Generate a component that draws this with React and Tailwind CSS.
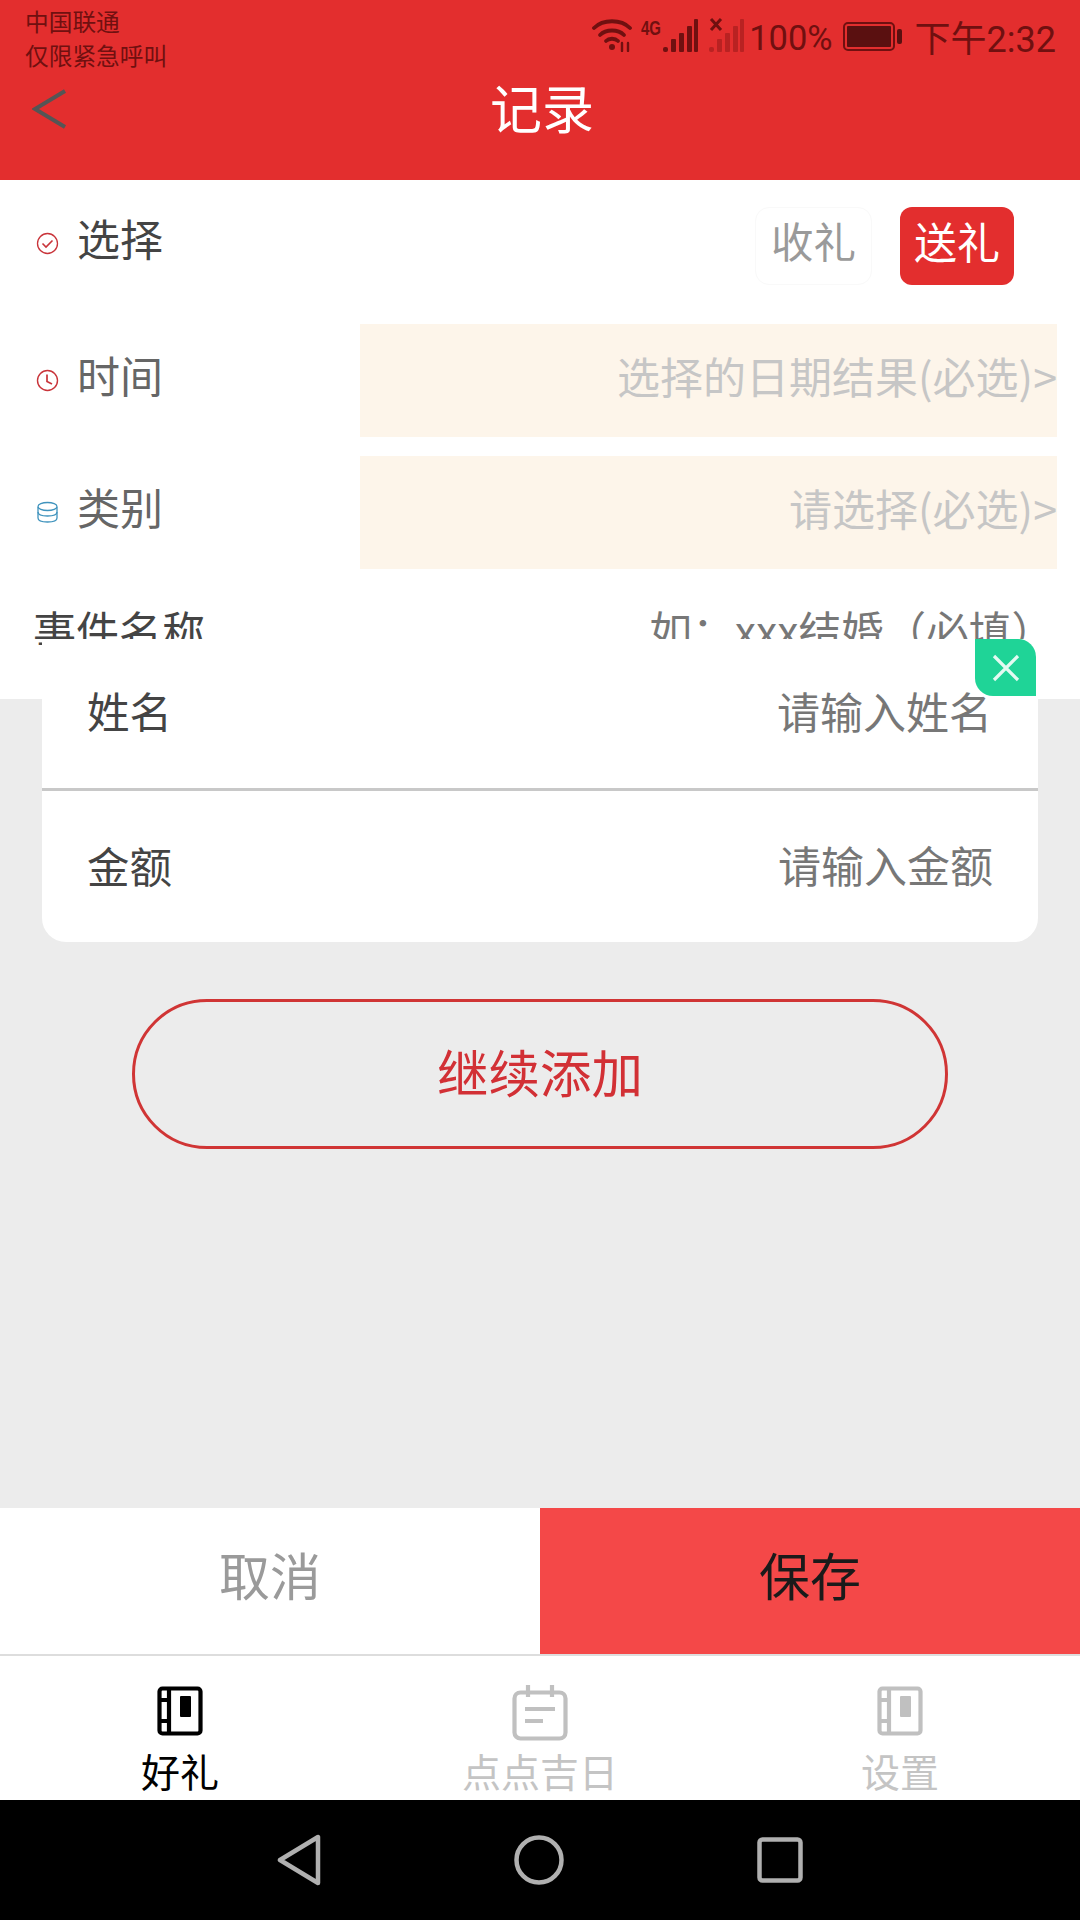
const cjk = "font-['Noto_Sans_CJK_SC','Noto_Sans',sans-serif]"

function Bars({ className }) {
  return (
    <svg width="36" height="34" viewBox="0 0 36 34" className={className}>
      <rect x="1" y="28" width="5" height="5" rx="2" fill="currentColor" />
      <rect x="9" y="20" width="5" height="13" rx="1" fill="currentColor" />
      <rect x="17" y="14" width="5" height="19" rx="1" fill="currentColor" />
      <rect x="25" y="7" width="5" height="26" rx="1" fill="currentColor" />
      <rect x="32" y="0" width="4" height="33" rx="1" fill="currentColor" />
    </svg>
  )
}

function StatusBar() {
  return (
    <div className="flex justify-between h-[68px] pl-[25px] pr-[24px] text-[#701010]">
      <div className="pt-[4px] text-[23.7px] leading-[34px]">
        <div>中国联通</div>
        <div>仅限紧急呼叫</div>
      </div>
      <div className="flex items-start pt-[18px]">
        <svg width="42" height="34" viewBox="0 0 42 34" fill="none" stroke="currentColor" strokeWidth="3.8" strokeLinecap="round">
          <path d="M2 10 C11 1 29 1 38 10" />
          <path d="M8 17 C14 11 26 11 32 17" />
          <path d="M14 23 C17 20 23 20 26 23" />
          <circle cx="20" cy="29" r="3" fill="currentColor" stroke="none" />
          <path d="M30 25 L30 33 M36 25 L36 33" strokeWidth="2.4" />
        </svg>
        <svg width="20" height="18" viewBox="0 0 20 18" className="ml-[7px] mt-[1px]">
          <text x="0" y="16" fontSize="20" fontWeight="700" fontFamily="Liberation Sans" fill="currentColor" textLength="20" lengthAdjust="spacingAndGlyphs">4G</text>
        </svg>
        <Bars className="ml-[1px] mt-[1px]" />
        <div className="relative ml-[10px] w-[36px] h-[34px]">
          <Bars className="text-[#b92222] mt-[1px]" />
          <svg width="16" height="14" viewBox="0 0 16 14" className="absolute left-0 top-0" stroke="#701010" strokeWidth="3">
            <path d="M3 1 L13 12 M13 1 L3 12" />
          </svg>
        </div>
        <span className="ml-[5px] mt-[2px] font-['Roboto',sans-serif] text-[34.5px] leading-[36px]">100%</span>
        <svg width="60" height="30" viewBox="0 0 60 30" className="ml-[10px] mt-[4px]">
          <rect x="1" y="1" width="50" height="27" rx="4" fill="none" stroke="#701010" strokeWidth="2" />
          <rect x="4" y="4" width="44" height="21" rx="1" fill="#5a1010" />
          <rect x="54" y="7" width="5" height="15" rx="2" fill="#5a1010" />
        </svg>
        <span className="ml-[12px] text-[36px] leading-[36px] whitespace-nowrap">下午<span className="font-['Roboto',sans-serif]">2:32</span></span>
      </div>
    </div>
  )
}

function Header() {
  return (
    <div className="h-[180px] bg-[#e32e2e] shrink-0">
      <StatusBar />
      <div className="relative flex items-center justify-center h-[86px]">
        <svg width="36" height="40" viewBox="0 0 36 40" fill="none" stroke="#555555" strokeWidth="4" className="absolute left-[32px] top-[21px]">
          <path d="M33 2 L3 20 L33 38" />
        </svg>
        <span className="text-[52px] leading-[60px] text-white pb-[8px] pl-[4px]">记录</span>
      </div>
    </div>
  )
}

function CheckIcon() {
  return (
    <svg width="23" height="23" viewBox="0 0 23 23" fill="none" stroke="#c9343a" strokeWidth="1.3">
      <circle cx="11.5" cy="11.5" r="10" />
      <path d="M6.5 11.5 L10 15 L16.5 8.5" strokeWidth="1.6" />
    </svg>
  )
}

function ClockIcon() {
  return (
    <svg width="23" height="23" viewBox="0 0 23 23" fill="none" stroke="#c9343a" strokeWidth="1.4">
      <circle cx="11.5" cy="11.5" r="10" />
      <path d="M11 5.5 L11 12.5 L16 15" strokeWidth="1.7" />
    </svg>
  )
}

function StackIcon() {
  return (
    <svg width="23" height="23" viewBox="0 0 23 23" fill="none" stroke="#3f93bd" strokeWidth="1.3">
      <ellipse cx="11.5" cy="5.5" rx="9.5" ry="4" />
      <path d="M2 6 L2 11 C2 13.5 6 15 11.5 15 C17 15 21 13.5 21 11 L21 6" />
      <path d="M2 11 L2 17 C2 19.5 6 21 11.5 21 C17 21 21 19.5 21 17 L21 11" />
    </svg>
  )
}

function RowLabel({ icon, text, className }) {
  return (
    <div className={"flex items-center pl-[36px] w-[360px] shrink-0 " + className}>
      <span className="w-[41px] pt-[4px]">{icon}</span>
      <span className="text-[43px] leading-[56px] pb-[8px]">{text}</span>
    </div>
  )
}

function PickerRow({ icon, text, hint, className }) {
  return (
    <div className={"flex h-[113px] pr-[23px] " + className}>
      <RowLabel icon={icon} text={text} className="text-[#666666] pb-[5px]" />
      <div className="flex-1 flex items-center justify-end bg-[#fdf5ea] text-[43px] text-[#c6c6c6] whitespace-nowrap pb-[10px]">{hint}</div>
    </div>
  )
}

function Form() {
  return (
    <div className="h-[519px] bg-white overflow-hidden pt-[27px] shrink-0">
      <div className="flex items-center h-[78px]">
        <RowLabel icon={<CheckIcon />} text="选择" className="text-[#444444] pb-[10px]" />
        <div className="ml-auto flex gap-[28px] mr-[66px]">
          <div className="w-[117px] h-[78px] flex items-center justify-center rounded-[14px] border border-[#f9f9f9] text-[42.5px] text-[#9a9a9a] pb-[12px]">收礼</div>
          <div className="w-[114px] h-[78px] flex items-center justify-center rounded-[12px] bg-[#e32e2e] text-[43px] text-white pb-[12px]">送礼</div>
        </div>
      </div>
      <PickerRow icon={<ClockIcon />} text="时间" hint="选择的日期结果(必选)>" className="mt-[39px]" />
      <PickerRow icon={<StackIcon />} text="类别" hint="请选择(必选)>" className="mt-[19px]" />
      <div className="flex justify-between items-center mt-[30px] pl-[33px] pr-[26px] h-[60px]">
        <span className="text-[43px] text-[#444444]">事件名称</span>
        <span className="text-[42.6px] text-[#777777]">如：xxx结婚（必填）</span>
      </div>
    </div>
  )
}

function InputCard() {
  return (
    <div className="relative -mt-[60px] mx-[42px] bg-white rounded-b-[24px] shrink-0">
      <div className="flex items-center justify-between h-[152px] pl-[45px] pr-[46px] pb-[7px] border-b-[3px] border-[#c8c8c8]">
        <span className="text-[42.5px] text-[#444444]">姓名</span>
        <span className="text-[43px] text-[#777777]">请输入姓名</span>
      </div>
      <div className="flex items-center justify-between h-[151px] pl-[45px] pr-[45px] pb-[4px]">
        <span className="text-[42.5px] text-[#444444]">金额</span>
        <span className="text-[43px] text-[#777777]">请输入金额</span>
      </div>
      <div className="absolute top-0 right-[2px] w-[61px] h-[57px] flex items-center justify-center bg-[#1fd497] rounded-tr-[18px] rounded-bl-[18px]">
        <svg width="30" height="30" viewBox="0 0 30 30" stroke="#e4faf2" strokeWidth="3.2">
          <path d="M3 3 L27 27 M27 3 L3 27" />
        </svg>
      </div>
    </div>
  )
}

function BookIcon({ color }) {
  return (
    <svg width="46" height="50" viewBox="0 0 46 50" fill="none" stroke={color} strokeWidth="4.2">
      <rect x="2.5" y="2.5" width="41" height="45" rx="3" />
      <path d="M12 2 L12 48 M2 14 L12 14 M2 35 L12 35" />
      <rect x="23" y="10" width="11" height="21" rx="1" fill={color} stroke="none" />
    </svg>
  )
}

function CalendarIcon() {
  return (
    <svg width="56" height="56" viewBox="0 0 56 56" fill="none" stroke="#c0c0c0" strokeWidth="4.2" className="-mb-[5px]">
      <rect x="2.5" y="7.5" width="51" height="46" rx="6" />
      <path d="M16 0 L16 12 M40 0 L40 12" />
      <path d="M13 24 L43 24 M13 36 L31 36" />
    </svg>
  )
}

function Tab({ icon, label, className }) {
  return (
    <div className="flex flex-col items-center">
      <div className="h-[80px] flex items-end">{icon}</div>
      <span className={"text-[39px] leading-[50px] mt-[9px] " + className}>{label}</span>
    </div>
  )
}

export default function App() {
  return (
    <div className={"w-[1080px] h-[1920px] flex flex-col bg-[#ececec] overflow-hidden " + cjk}>
      <Header />
      <Form />
      <InputCard />
      <div className="flex-1 pt-[57px] px-[132px]">
        <div className="h-[150px] flex items-center justify-center rounded-full border-[3px] border-[#d03535] text-[51.5px] text-[#d23035] pb-[6px]">继续添加</div>
      </div>
      <div className="grid grid-cols-2 h-[146px] text-[51px] shrink-0">
        <div className="bg-white flex items-center justify-center text-[#9a9a9a] pb-[14px]">取消</div>
        <div className="bg-[#f44848] flex items-center justify-center text-[#1a1a1a] pb-[14px]">保存</div>
      </div>
      <div className="grid grid-cols-3 h-[146px] bg-white border-t-2 border-[#dddddd] shrink-0 overflow-hidden">
        <Tab icon={<BookIcon color="#000000" />} label="好礼" className="text-black" />
        <Tab icon={<CalendarIcon />} label="点点吉日" className="text-[#c4c4c4]" />
        <Tab icon={<BookIcon color="#c0c0c0" />} label="设置" className="text-[#c4c4c4]" />
      </div>
      <div className="h-[120px] bg-black flex items-center justify-center gap-[193px] shrink-0">
        <svg width="44" height="52" viewBox="0 0 44 52" fill="none" stroke="#b0b0b0" strokeWidth="4.5" strokeLinejoin="round">
          <path d="M3 26 L41 3 L41 49 Z" />
        </svg>
        <svg width="50" height="50" viewBox="0 0 50 50" fill="none" stroke="#b0b0b0" strokeWidth="4.5">
          <circle cx="25" cy="25" r="22.5" />
        </svg>
        <svg width="46" height="46" viewBox="0 0 46 46" fill="none" stroke="#b0b0b0" strokeWidth="4.5" strokeLinejoin="round">
          <rect x="2.5" y="2.5" width="41" height="41" rx="3" />
        </svg>
      </div>
    </div>
  )
}
